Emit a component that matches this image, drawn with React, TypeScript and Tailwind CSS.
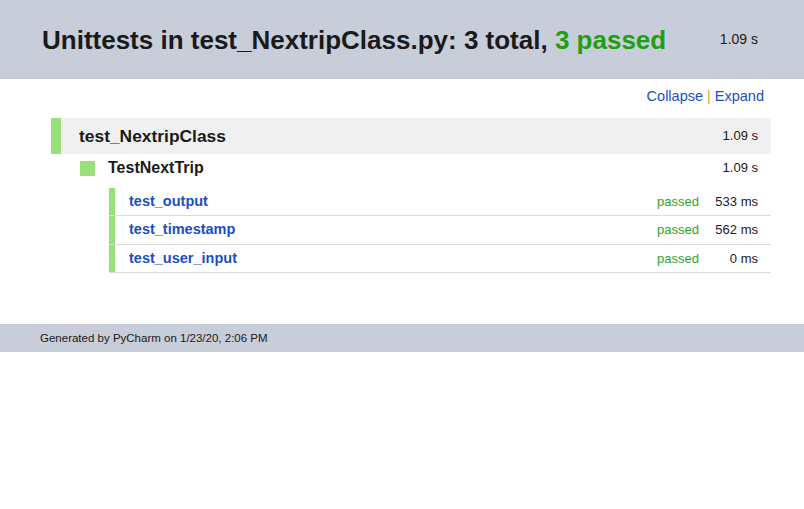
import React from 'react';

const tests = [
  { name: 'test_output', time: '533 ms' },
  { name: 'test_timestamp', time: '562 ms' },
  { name: 'test_user_input', time: '0 ms' },
];

export default function App() {
  return (
    <div className="min-h-screen bg-white text-[#1a1a1a]" style={{ fontFamily: '"Liberation Sans", Arial, sans-serif' }}>
      {/* header */}
      <div className="flex h-[79px] items-center bg-[#c7cdd9] pl-[42px] pr-[46px]">
        <h1 className="flex-1 text-[26px] font-bold leading-none">
          Unittests in test_NextripClass.py: 3 total, <span className="text-[#1ea00e]">3 passed</span>
        </h1>
        <span className="text-[14px]">1.09 s</span>
      </div>

      {/* toolbar */}
      <div className="flex justify-end pr-[40px] pt-[8px] text-[14.5px] leading-[18px]">
        <span className="text-[#1a4fbf]">Collapse</span>
        <span className="px-[4px] text-[#e0a040]">|</span>
        <span className="text-[#1a4fbf]">Expand</span>
      </div>

      {/* suite */}
      <div className="ml-[51px] mr-[33px] mt-[13px]">
        <div className="flex h-[36px] items-center border-l-[10px] border-[#97e07a] bg-[#f0f0f0] pl-[18px] pr-[13px]">
          <span className="flex-1 text-[17.4px] font-bold">test_NextripClass</span>
          <span className="text-[13px]">1.09 s</span>
        </div>

        <div className="flex h-[28px] items-center pl-[29px] pr-[13px]">
          <span className="h-[15px] w-[15px] bg-[#97e07a]" />
          <span className="ml-[13px] flex-1 text-[16px] font-bold">TestNextTrip</span>
          <span className="text-[13px]">1.09 s</span>
        </div>

        <div className="ml-[58px] mt-[6px]">
          {tests.map((t) => (
            <div key={t.name} className="flex h-[28.4px] items-center border-b border-[#dcdcdc] pr-[13px]">
              <span className="h-full w-[6px] bg-[#97e07a]" />
              <span className="ml-[14px] flex-1 text-[14.5px] font-bold text-[#1a4fbf]">{t.name}</span>
              <span className="text-[13px] text-[#2ca52c]">passed</span>
              <span className="w-[59px] text-right text-[13px]">{t.time}</span>
            </div>
          ))}
        </div>
      </div>

      {/* footer */}
      <div className="mt-[51px] flex h-[28px] items-center bg-[#c7cdd9] pl-[40px] text-[11.5px]">
        Generated by PyCharm on 1/23/20, 2:06 PM
      </div>
    </div>
  );
}
